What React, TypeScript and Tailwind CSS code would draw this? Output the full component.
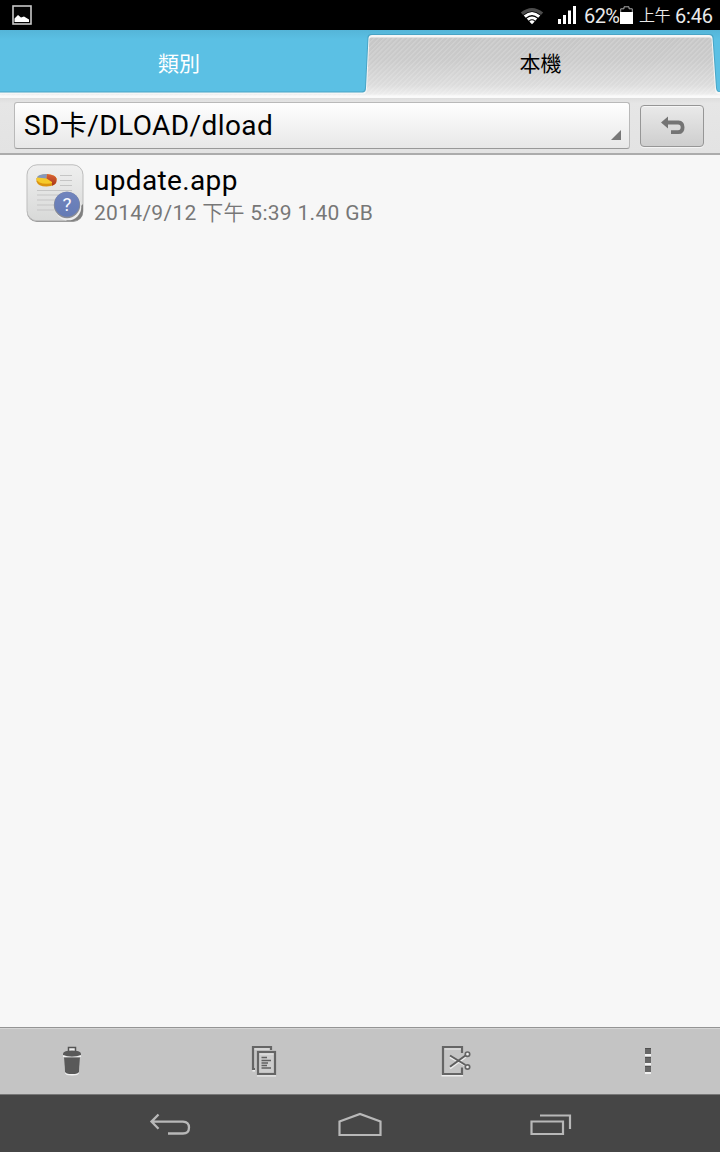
import type { ReactNode } from 'react';

const cjk = "font-['Roboto','Noto_Sans_CJK_TC',sans-serif]";

function StatusBar() {
  return (
    <header className="flex h-[30px] shrink-0 items-center bg-black pl-3 text-[#e9e9e9]">
      <svg width="20" height="20" viewBox="0 0 20 20" className="shrink-0">
        <rect x="1" y="1" width="18" height="18" fill="#050505" stroke="#c8c8c8" strokeWidth="1.6" />
        <path d="M2.5 17V13.5L6 10L9 12.5L12 11.5L17 14.5V17Z" fill="#fff" />
      </svg>
      <div className="ml-auto flex h-full items-center">
        <svg width="24" height="18" viewBox="0 0 24 18" className="mr-3.5 mt-px">
          <path d="M0.8 5.6Q12 -3.6 23.2 5.6L21 8Q12 0.6 3 8Z" fill="#4c4c4c" />
          <path d="M3.7 8.5Q12 1.4 20.3 8.5L18.2 10.7Q12 5.4 5.8 10.7Z" fill="#fff" />
          <path d="M6.7 11.6Q12 7.2 17.3 11.6L15.3 13.7Q12 11 8.7 13.7Z" fill="#fff" />
          <path d="M9.3 14.4Q12 12.3 14.7 14.4L12 17.2Z" fill="#fff" />
        </svg>
        <svg width="18" height="18" viewBox="0 0 18 18" className="mr-2">
          <path d="M0 13H3V18H0ZM5 9H8V18H5ZM10 4.5H13V18H10ZM15 0H18V18H15Z" fill="#fff" />
        </svg>
        <span className="w-9 whitespace-nowrap pt-px text-[20px] leading-[30px] tracking-[-0.6px]">62%</span>
        <svg width="13" height="18" viewBox="0 0 13 18" className="mr-1.5">
          <path d="M4 0.8H9V2.8H12.3V7H0.7V2.8H4Z" fill="#000" stroke="#aaa" strokeWidth="1" />
          <path d="M0 6H13V18H0Z" fill="#fff" />
        </svg>
        <span className="w-[36px] whitespace-nowrap pt-0.5 text-[16px] font-[350] leading-[30px] tracking-[-0.4px]">上午</span>
        <span className="w-[45px] whitespace-nowrap pt-px text-[20px] leading-[30px] tracking-[-0.2px]">6:46</span>
      </div>
    </header>
  );
}

function Tabs() {
  return (
    <nav className="relative flex h-[68px] shrink-0 bg-[#5bc0e4] text-[21px]">
      <div className="absolute inset-0 bg-linear-to-b from-[#55b5d8] via-[#5bc0e4] via-15% to-[#5bc0e4]" />
      <div className="absolute inset-0 bg-[#3f94b4] opacity-60 [clip-path:path('M0_61.5H362Q365_61_365_57L367.5_7Q368_4_371_4H710Q713_4_713.5_7L717_58Q717.5_61.5_720_61.5V68H0Z')]" />
      <div className="absolute inset-0 bg-[#f6f6f6] [clip-path:path('M0_62.5H363Q366_62_366_58L368.5_8Q369_5_372_5H709Q712_5_712.5_8L716_58Q716.5_62_719_62H720V68H0Z')]" />
      <div className="absolute inset-0 bg-[linear-gradient(to_bottom,#c6c6c6_7px,#cbcbcb_30px,#dcdcdc_55px,#ececec_64px,#fafafa_66px)] [clip-path:path('M0_64H365Q367_62_367_58L369.3_9Q369.5_7.5_371_7.5H710Q711.5_7.5_711.6_9L715_59Q715.5_64_718_64H720V68H0Z')]">
        <div className="h-[66px] bg-[repeating-linear-gradient(135deg,#ffffff24_0px,#ffffff24_1.2px,transparent_1.8px,transparent_3.5px)]" />
      </div>
      <button className="relative w-[360px] pr-0.5 pt-px text-white">類別</button>
      <button className="relative w-[360px] pl-px pt-px text-black">本機</button>
    </nav>
  );
}

function PathBar() {
  return (
    <section className="flex h-[57px] shrink-0 items-start border-b-2 border-[#acacac] bg-linear-to-b from-[#dedede] via-[#e6e6e6] via-10% to-[#e3e3e3] pl-3.5 pt-1">
      <button className="flex h-[47px] w-[616px] justify-between rounded-[3px] border border-[#b9b9b9] border-b-[#999] bg-linear-to-b from-[#fefefe] to-[#e8e8e8] pl-[9px] pr-2 text-black">
        <span className="whitespace-nowrap text-[28px] leading-[45px] tracking-[0.42px]">SD<span className="text-[27px]">卡</span>/DLOAD/dload</span>
        <svg width="10" height="10" viewBox="0 0 10 10" className="mt-[27px]">
          <path d="M10 0V10H0Z" fill="#777" />
        </svg>
      </button>
      <button className="ml-2.5 mt-[3px] flex h-[42px] w-16 items-center justify-center rounded border border-[#969696] bg-linear-to-b from-[#eaeaea] to-[#cecece] shadow-[inset_0_1px_0_#f6f6f6,0_1px_0_#f4f4f4]">
        <svg width="24" height="20" viewBox="0 0 24 20" className="ml-0.5">
          <path d="M7 0.5V4.5H17.5Q23.5 5 23.5 11.2Q23.5 18 17.5 18H10V14.2H17Q19.7 14 19.7 11.2Q19.7 8.7 17 8.5H7V12.5L0 6.5Z" fill="#747474" />
        </svg>
      </button>
    </section>
  );
}

function FileIcon() {
  return (
    <svg width="58" height="60" viewBox="0 0 58 60" className="shrink-0">
      <defs>
        <linearGradient id="paper" x1="0" y1="0" x2="0" y2="1">
          <stop stopColor="#efefef" />
          <stop offset="1" stopColor="#d8d9d8" />
        </linearGradient>
        <linearGradient id="badge" x1="0" y1="0" x2="0" y2="1">
          <stop stopColor="#7184bd" />
          <stop offset="1" stopColor="#657bb5" />
        </linearGradient>
        <linearGradient id="rust" x1="0" y1="0" x2="0" y2="1">
          <stop stopColor="#d96338" />
          <stop offset="1" stopColor="#aa3718" />
        </linearGradient>
      </defs>
      <rect x="1" y="2" width="56" height="56" rx="10" fill="#8f8f8f" />
      <rect x="1" y="0.8" width="56" height="56" rx="10" fill="url(#paper)" stroke="#bdbdbd" strokeWidth="1" />
      <path d="M34 11.5H46M34 16.5H46M34 21.5H46M11 26.5H46M11 31H46M11 36H30M11 41H28M11 46H28" stroke="#c5c5c5" strokeWidth="1.2" />
      <path d="M10.5 14V17.5Q12 22.5 20.5 22.5Q30.5 22 30.5 16V14Z" fill="#dc9410" />
      <ellipse cx="20.5" cy="15" rx="10" ry="4.8" fill="#f6ca2b" />
      <path d="M20.5 14.5L11 13.5Q12 10.3 21 10Z" fill="#8497bc" />
      <path d="M20.5 14.5L21 10Q30.5 11 30.5 15V17.5Q30 20.5 26 21.7V18Z" fill="url(#rust)" />
      <path d="M40 57H48Q57 56 57 47V40Z" fill="#808080" />
      <circle cx="42" cy="43" r="13.3" fill="#ededed" />
      <circle cx="41" cy="41" r="13.2" fill="#8b8d95" />
      <circle cx="41" cy="40.2" r="12.5" fill="url(#badge)" />
      <text x="41" y="46.5" textAnchor="middle" fontSize="19" fill="#f7f8ff" fontFamily="Roboto">?</text>
    </svg>
  );
}

function FileRow() {
  return (
    <article className="flex pl-[26px] pt-[9px]">
      <FileIcon />
      <div className="ml-2.5 whitespace-nowrap">
        <h1 className="pt-px text-[28px] leading-8 tracking-[0.35px] text-black">update.app</h1>
        <p className="text-[21px] leading-8 tracking-[0.3px] text-[#777]">2014/9/12 <span className="font-[350]">下午</span> 5:39 1.40 GB</p>
      </div>
    </article>
  );
}

function IconButton({ label, children }: { label: string; children: ReactNode }) {
  return <button aria-label={label} className="flex w-12 items-center justify-center">{children}</button>;
}

function Toolbar() {
  return (
    <footer className="flex h-[68px] shrink-0 justify-between border-b border-t border-b-[#777] border-t-[#949494] bg-[#c4c4c4] px-12 shadow-[inset_0_1px_0_#d5d5d5]">
      <IconButton label="刪除">
        <svg width="20" height="30" viewBox="0 0 20 30">
          <path d="M2 12.5H18L17 27Q16.7 29.5 10 29.5Q3.3 29.5 3 27Z" fill="#f1f1f1" />
          <path d="M2 11.5H18L17 25.7Q16.5 28 10 28Q3.5 28 3 25.7Z" fill="#595959" />
          <path d="M6.5 5V1.5H13.5V5" fill="#eee" stroke="#555" strokeWidth="1.5" />
          <path d="M1 7.5Q1.7 4.5 10 4.5Q18.3 4.5 19 7.5V9Q10 12 1 9Z" fill="#595959" />
          <path d="M1 9.3Q10 12.5 19 9.3V11H1Z" fill="#f0f0f0" />
        </svg>
      </IconButton>
      <IconButton label="複製">
        <svg width="26" height="32" viewBox="0 0 26 32" fill="none">
          <path d="M1.5 25.5H4M6 30.5H25" stroke="#ededed" strokeWidth="2" />
          <path d="M4 24H2V2H20V5" stroke="#656565" strokeWidth="2.2" />
          <path d="M3.5 4H18.5" stroke="#e7e7e7" />
          <rect x="7" y="7" width="17" height="22" fill="#cdcdcd" stroke="#656565" strokeWidth="2.2" />
          <path d="M8.5 9H22.5" stroke="#e8e8e8" />
          <path d="M10.5 12.5H16M10.5 15.5H20M10.5 18H17M10.5 20.5H16M10.5 23H20" stroke="#606060" strokeWidth="1.5" />
        </svg>
      </IconButton>
      <IconButton label="剪下">
        <svg width="30" height="32" viewBox="0 0 30 32" fill="none">
          <path d="M0.5 30.5H22" stroke="#ededed" strokeWidth="2" />
          <path d="M21 8V2H2V29H21V22.5" stroke="#656565" strokeWidth="2.2" />
          <path d="M3.5 4H20" stroke="#e7e7e7" />
          <path d="M9 12L24.5 20.5M9 23.5L24.5 12" stroke="#eee" strokeWidth="2" />
          <path d="M9 10.5L24.5 20M9 21.8L24.5 10.5" stroke="#5f5f5f" strokeWidth="2" />
          <circle cx="26.5" cy="9.2" r="2.2" fill="#eee" stroke="#656565" strokeWidth="1.7" />
          <circle cx="26.5" cy="22" r="2.2" fill="#eee" stroke="#656565" strokeWidth="1.7" />
        </svg>
      </IconButton>
      <IconButton label="更多">
        <svg width="6" height="28" viewBox="0 0 6 28">
          <path d="M0 2H6V9H0ZM0 11H6V18H0ZM0 20H6V27H0Z" fill="#f0f0f0" />
          <path d="M0 1H6V7H0ZM0 10H6V16H0ZM0 19H6V25H0Z" fill="#676767" />
          <path d="M0 1H6V2H0ZM0 10H6V11H0ZM0 19H6V20H0Z" fill="#505050" />
        </svg>
      </IconButton>
    </footer>
  );
}

function NavigationBar() {
  return (
    <nav className="flex h-[57px] shrink-0 items-center justify-between bg-[#464646] px-[146px] pt-[3px]">
      <IconButton label="返回">
        <svg width="42" height="24" viewBox="0 0 42 24" fill="none" stroke="#b8b8b8" strokeWidth="2.3">
          <path d="M9.5 1.5L2.5 8.6L9.5 15.8M3 8.6H34Q40 9 40 14.5Q40 20.5 34 20.5H19" />
        </svg>
      </IconButton>
      <IconButton label="主畫面">
        <svg width="44" height="26" viewBox="0 0 44 26" fill="none">
          <path d="M1.5 9.5L22 2L42.5 9.5V23H1.5Z" stroke="#b8b8b8" strokeWidth="2.2" />
        </svg>
      </IconButton>
      <IconButton label="最近使用">
        <svg width="42" height="24" viewBox="0 0 42 24" fill="none" stroke="#b8b8b8" strokeWidth="2.2" className="ml-0.5">
          <path d="M10 2.5H40V16M1.5 8.5H33V21H1.5Z" />
        </svg>
      </IconButton>
    </nav>
  );
}

export default function App() {
  return (
    <div className={`flex h-[1152px] w-[720px] flex-col overflow-hidden bg-[#f7f7f7] ${cjk}`}>
      <StatusBar />
      <Tabs />
      <PathBar />
      <main className="min-h-0 flex-1">
        <FileRow />
      </main>
      <Toolbar />
      <NavigationBar />
    </div>
  );
}
